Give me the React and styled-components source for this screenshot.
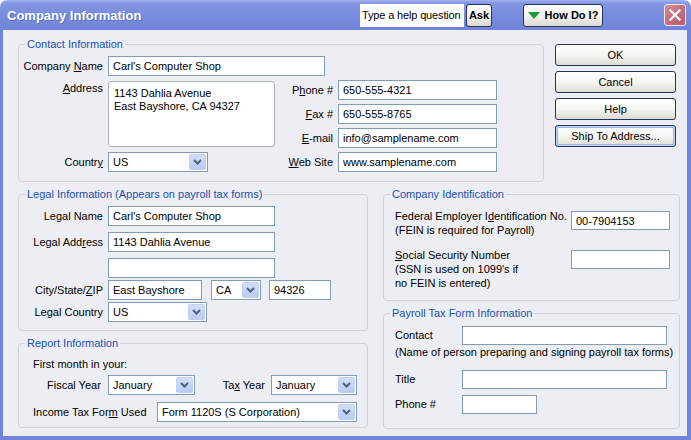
import React from 'react';
import styled, { createGlobalStyle } from 'styled-components';

const Global = createGlobalStyle`
  html, body { margin: 0; padding: 0; background: #ffffff; }
  body { font-family: "Liberation Sans", Arial, sans-serif; font-size: 11px; color: #000; }
  * { box-sizing: border-box; }
`;

const FONT = `"Liberation Sans", Arial, sans-serif`;

const Window = styled.div`
  width: 691px;
  height: 440px;
  display: flex;
  flex-direction: column;
  border-radius: 7px 7px 0 0;
  overflow: hidden;
`;

const TitleBar = styled.div`
  height: 30px;
  flex: none;
  display: flex;
  align-items: center;
  padding: 0 5px 0 7px;
  background: linear-gradient(#a3b4ef 0px, #8497e3 3px, #788ddd 45%, #6f84d9 100%);
`;

const Title = styled.div`
  font: bold 13px ${FONT};
  color: #fff;
  text-shadow: 1px 1px 0 #5b6fbf;
  margin-top: 1px;
`;

const HelpBox = styled.div`
  margin-left: auto;
  width: 104px;
  height: 23px;
  background: #fff;
  display: flex;
  align-items: center;
  padding-left: 2px;
  font: 11px ${FONT};
  letter-spacing: -0.15px;
  white-space: nowrap;
  overflow: hidden;
`;

const BarButton = styled.div`
  height: 23px;
  width: ${p => p.$w}px;
  margin-left: ${p => p.$ml}px;
  border: 1px solid #2a3350;
  border-radius: 3px;
  background: linear-gradient(#ffffff, #f2f2ee 55%, #d9d9d2);
  display: flex;
  align-items: center;
  justify-content: center;
  gap: 5px;
  font: bold 11px ${FONT};
`;

const CloseBtn = styled.div`
  width: 22px;
  height: 22px;
  margin-left: 61px;
  border: 1px solid #f4e6ea;
  border-radius: 3px;
  background: linear-gradient(135deg, #d58c98, #c26a79 60%, #b75b6b);
  display: flex;
  align-items: center;
  justify-content: center;
`;

const Frame = styled.div`
  flex: 1;
  border-style: solid;
  border-color: #7085d9;
  border-width: 0 4px 4px 3px;
  background: #eceef4;
  padding: 7px 7px 0 15px;
  display: flex;
  flex-direction: column;
`;

const TopRow = styled.div`
  display: flex;
  align-items: flex-start;
`;

const LowerRow = styled.div`
  display: flex;
  gap: 15px;
  margin-top: 5px;
`;

const Column = styled.div`
  width: ${p => p.$w}px;
  display: flex;
  flex-direction: column;
  gap: 5px;
`;

const Group = styled.fieldset`
  margin: 0;
  padding: 0;
  width: ${p => (p.$w ? `${p.$w}px` : 'auto')};
  min-width: 0;
  border: 1px solid #cfd1d6;
  border-radius: 4px;
`;

const Legend = styled.legend`
  margin-left: 6px;
  padding: 0 2px;
  font: 11px ${FONT};
  line-height: 14px;
  color: #2150b0;
`;

const ButtonCol = styled.div`
  margin-left: 11px;
  margin-top: 7px;
  width: 121px;
  display: flex;
  flex-direction: column;
  gap: 5px;
`;

const Btn = styled.button`
  height: 22px;
  width: 100%;
  padding: 0;
  border: 1px solid #22345e;
  border-radius: 3px;
  background: linear-gradient(#ffffff, #f4f4f0 55%, #dcdcd4);
  font: 11px ${FONT};
  color: #000;
  box-shadow: ${p => (p.$focus ? 'inset 0 0 0 1px #c6d8f6, inset 0 0 0 2px #98b6ea' : 'none')};
`;

const U = styled.span`
  text-decoration: underline;
`;

const Label = styled.label`
  grid-column: ${p => p.$c || 'auto'};
  grid-row: ${p => p.$r || 'auto'};
  align-self: start;
  display: block;
  height: ${p => p.$h || 20}px;
  font-family: ${FONT};
  font-size: 11px;
  line-height: ${p => (p.$top ? 14 : p.$h || 20)}px;
  padding-top: ${p => (p.$top ? 1 : 0)}px;
  text-align: ${p => (p.$left ? 'left' : 'right')};
  padding-right: ${p => (p.$left ? 0 : 5)}px;
  white-space: nowrap;
`;

const Input = styled.input`
  grid-column: ${p => p.$c || 'auto'};
  grid-row: ${p => p.$r || 'auto'};
  align-self: start;
  flex: none;
  margin: ${p => p.$mt || 0}px 0 0 ${p => p.$ml || 0}px;
  width: ${p => p.$w}px;
  height: ${p => p.$h || 20}px;
  border: 1px solid #7f9db9;
  background: #fff;
  padding: 0 4px;
  font: 11px ${FONT};
  color: #000;
  outline: none;
`;

const TextArea = styled.textarea`
  grid-column: ${p => p.$c};
  grid-row: ${p => p.$r};
  align-self: start;
  margin: 1px 0 0 0;
  width: 167px;
  height: 66px;
  border: 1px solid #a9b2bd;
  border-radius: 3px;
  background: #fff;
  padding: 5px 5px;
  font: 11px ${FONT};
  line-height: 13px;
  color: #000;
  resize: none;
  outline: none;
  overflow: hidden;
`;

const SelectBox = styled.div`
  grid-column: ${p => p.$c || 'auto'};
  grid-row: ${p => p.$r || 'auto'};
  align-self: start;
  margin-left: ${p => p.$ml || 0}px;
  width: ${p => p.$w}px;
  height: 20px;
  flex: none;
  border: 1px solid #7f9db9;
  background: #fff;
  display: flex;
  align-items: center;
  justify-content: space-between;
  padding: 0 1px 0 4px;
  font: 11px ${FONT};
  white-space: nowrap;
`;

const DropBtn = styled.span`
  width: 17px;
  height: 16px;
  border: 1px solid #c2cff3;
  border-radius: 2px;
  background: linear-gradient(#d3def9, #b9cbf4);
  display: flex;
  align-items: center;
  justify-content: center;
`;

const Select = ({ value, ...rest }) => (
  <SelectBox {...rest}>
    <span>{value}</span>
    <DropBtn>
      <svg width="9" height="6" viewBox="0 0 9 6">
        <path d="M1 1 L4.5 4.5 L8 1" fill="none" stroke="#4d6185" strokeWidth="2" />
      </svg>
    </DropBtn>
  </SelectBox>
);

const ContactGrid = styled.div`
  display: grid;
  grid-template-columns: 89px 167px 63px 159px;
  grid-template-rows: repeat(5, 20px);
  row-gap: 4px;
  padding: 5px 0 9px;
`;

const LegalGrid = styled.div`
  display: grid;
  grid-template-columns: 89px auto;
  grid-template-rows: 26px 26px 22px 22px 20px;
  padding: 5px 0 8px;
`;

const InlineRow = styled.div`
  display: flex;
  align-items: flex-start;
`;

const ReportGrid = styled.div`
  display: grid;
  grid-template-rows: 21px 27px 20px;
  padding: 4px 0 5px 14px;
`;

const Row = styled.div`
  display: flex;
  align-items: flex-start;
`;

const RowText = styled.div`
  height: 20px;
  font-family: ${FONT};
  font-size: 11px;
  line-height: 20px;
`;

const FieldLabel = styled.div`
  width: ${p => p.$w}px;
  height: 20px;
  flex: none;
  font-family: ${FONT};
  font-size: 11px;
  line-height: 20px;
  text-align: ${p => (p.$right ? 'right' : 'left')};
  padding-left: ${p => p.$pl || 0}px;
  padding-right: ${p => p.$pr || 0}px;
  white-space: nowrap;
`;

const IdGrid = styled.div`
  display: grid;
  grid-template-columns: 176px 99px;
  grid-template-rows: 28px 42px;
  row-gap: 11px;
  padding: 8px 11px 10px;
`;

const Para = styled.div`
  grid-column: ${p => p.$c || 'auto'};
  font-family: ${FONT};
  font-size: 11px;
  line-height: 14px;
  white-space: nowrap;
`;

const PayGrid = styled.div`
  display: grid;
  grid-template-columns: 67px 205px;
  grid-template-rows: 19px 25px 25px 19px;
  padding: 6px 12px 14px 11px;
`;

export default function App() {
  return (
    <>
      <Global />
      <Window>
        <TitleBar>
          <Title>Company Information</Title>
          <HelpBox>Type a help question</HelpBox>
          <BarButton $w={26} $ml={2}>Ask</BarButton>
          <BarButton $w={80} $ml={31}>
            <svg width="12" height="7" viewBox="0 0 12 7">
              <path d="M0 0 H12 L6 7 Z" fill="#1f9a3e" />
            </svg>
            How Do I?
          </BarButton>
          <CloseBtn>
            <svg width="12" height="12" viewBox="0 0 12 12">
              <path d="M1.5 1.5 L10.5 10.5 M10.5 1.5 L1.5 10.5" stroke="#fff" strokeWidth="2.2" strokeLinecap="square" />
            </svg>
          </CloseBtn>
        </TitleBar>
        <Frame>
          <TopRow>
            <Group $w={526}>
              <Legend>Contact Information</Legend>
              <ContactGrid>
                <Label $c={1} $r={1}>Company <U>N</U>ame</Label>
                <Input $c="2 / span 3" $r={1} $w={217} readOnly value="Carl's Computer Shop" />
                <Label $c={1} $r={2} $top><U>A</U>ddress</Label>
                <TextArea $c={2} $r="2 / span 3" readOnly value={'1143 Dahlia Avenue\nEast Bayshore, CA 94327'} />
                <Label $c={3} $r={2}>P<U>h</U>one #</Label>
                <Input $c={4} $r={2} $w={159} readOnly value="650-555-4321" />
                <Label $c={3} $r={3}><U>F</U>ax #</Label>
                <Input $c={4} $r={3} $w={159} readOnly value="650-555-8765" />
                <Label $c={3} $r={4}><U>E</U>-mail</Label>
                <Input $c={4} $r={4} $w={159} readOnly value="info@samplename.com" />
                <Label $c={1} $r={5}>Countr<U>y</U></Label>
                <Select $c={2} $r={5} $w={100} value="US" />
                <Label $c={3} $r={5}><U>W</U>eb Site</Label>
                <Input $c={4} $r={5} $w={159} readOnly value="www.samplename.com" />
              </ContactGrid>
            </Group>
            <ButtonCol>
              <Btn>OK</Btn>
              <Btn>Cancel</Btn>
              <Btn>Help</Btn>
              <Btn $focus>Ship To Address...</Btn>
            </ButtonCol>
          </TopRow>
          <LowerRow>
            <Column $w={350}>
              <Group>
                <Legend>Legal Information (Appears on payroll tax forms)</Legend>
                <LegalGrid>
                  <Label>Le<U>g</U>al Name</Label>
                  <Input $w={167} readOnly value="Carl's Computer Shop" />
                  <Label>Legal Add<U>r</U>ess</Label>
                  <Input $w={167} readOnly value="1143 Dahlia Avenue" />
                  <Label />
                  <Input $w={167} readOnly value="" />
                  <Label>City/State/<U>Z</U>IP</Label>
                  <InlineRow>
                    <Input $w={94} readOnly value="East Bayshore" />
                    <Select $w={50} $ml={9} value="CA" />
                    <Input $w={62} $ml={8} readOnly value="94326" />
                  </InlineRow>
                  <Label>Legal Country</Label>
                  <Select $w={99} value="US" />
                </LegalGrid>
              </Group>
              <Group>
                <Legend>Report Information</Legend>
                <ReportGrid>
                  <RowText>First month in your:</RowText>
                  <Row>
                    <FieldLabel $w={75} $pl={14}>Fiscal Year</FieldLabel>
                    <Select $w={87} value="January" />
                    <FieldLabel $w={76} $right $pr={6}>Ta<U>x</U> Year</FieldLabel>
                    <Select $w={86} value="January" />
                  </Row>
                  <Row>
                    <FieldLabel $w={124}>Income Tax For<U>m</U> Used</FieldLabel>
                    <Select $w={200} value="Form 1120S (S Corporation)" />
                  </Row>
                </ReportGrid>
              </Group>
            </Column>
            <Column $w={297}>
              <Group>
                <Legend>Company Identification</Legend>
                <IdGrid>
                  <Para>Federal Employer I<U>d</U>entification No.<br />(FEIN is required for Payroll)</Para>
                  <Input $w={99} $h={19} $mt={2} readOnly value="00-7904153" />
                  <Para><U>S</U>ocial Security Number<br />(SSN is used on 1099's if<br />no FEIN is entered)</Para>
                  <Input $w={99} $h={19} $mt={2} readOnly value="" />
                </IdGrid>
              </Group>
              <Group>
                <Legend>Payroll Tax Form Information</Legend>
                <PayGrid>
                  <Label $left $h={19}>Contact</Label>
                  <Input $w={205} $h={19} readOnly value="" />
                  <Para $c="1 / span 2">(Name of person preparing and signing payroll tax forms)</Para>
                  <Label $left $h={19}>Title</Label>
                  <Input $w={205} $h={19} readOnly value="" />
                  <Label $left $h={19}>Phone #</Label>
                  <Input $w={75} $h={19} readOnly value="" />
                </PayGrid>
              </Group>
            </Column>
          </LowerRow>
        </Frame>
      </Window>
    </>
  );
}
